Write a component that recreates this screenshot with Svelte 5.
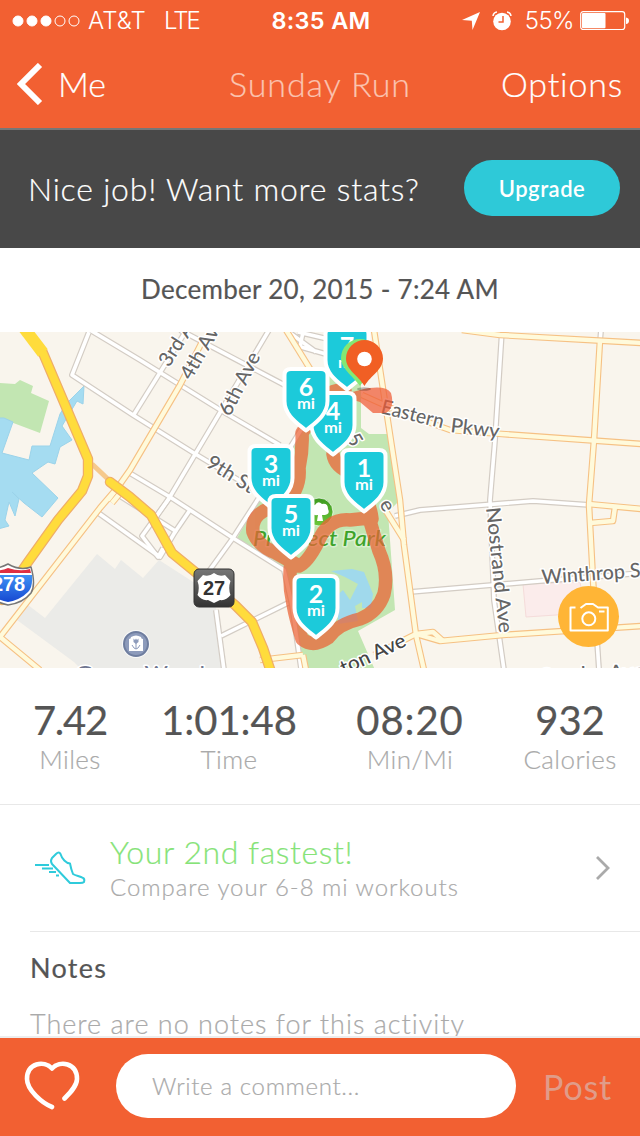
<script lang="ts">
  const stats = [
    { value: "7.42", label: "Miles", cls: "miles" },
    { value: "1:01:48", label: "Time", cls: "time" },
    { value: "08:20", label: "Min/Mi", cls: "pace" },
    { value: "932", label: "Calories", cls: "cal" },
  ];

  // x is the centre of the marker, y its top edge
  const backMarkers = [{ n: 7, x: 347, y: 326 }];
  const markers = [
    { n: 4, x: 333, y: 391 },
    { n: 6, x: 306, y: 367 },
    { n: 3, x: 271, y: 444 },
    { n: 1, x: 364, y: 448 },
    { n: 5, x: 291, y: 494 },
    { n: 2, x: 316, y: 574 },
  ];

  const streets = [
    "M180 330L292 389",
    "M90 330L140 360L222 411L280 445",
    "M89 332L72 375L133 415L197 455L262 494",
    "M133 416L184 334",
    "M269 330L168 500L142 536L158 557L163 548",
    "M128 472L170 497L190 510L233 538L284 570L292 605L301 668",
    "M120 496L177 532",
    "M190 510L175 532L160 557L97 512",
    "M170 497L156 517",
    "M204 578L233 538L262 493L304 425",
    "M216 610L224 670",
    "M221 636L288 603",
    "M286 330L316 352M298 332L345 343M294 345L340 358M303 332L300 347",
    "M502 330L495 440L490 500L494 600L504 670",
    "M601 330L600 342",
    "M395 516L420 510L533 501L590 505",
    "M410 592L540 581L642 573",
    "M597 640L599 670",
  ];

  const avenues = [
    "M204 338L180 385L130 470L118 487L100 508L0 637L40 670",
    "M118 487L108 500M122 491L112 503",
    "M286 330L312 372",
    "M374 330L400 500L404 545L416 635L424 670",
    "M384 508L404 540",
    "M362 395L400 412L450 430L502 434L642 444",
    "M462 330L500 335L642 343",
    "M600 340L594 440L589 505L593 580L597 640",
    "M588 504L642 509",
    "M590 523L613 521L615 507",
    "M374 655L416 634L440 641L503 635L642 626",
    "M416 634L433 632L443 641",
    "M260 660L303 655M303 655L306 670",
  ];

  const highways = [
    "M24 328L43 353L88 459L88 476L82 491L58 520L28 562L2 600",
    "M110 482L130 497L151 515L172 553L205 580L235 605L252 622L263 648L271 672",
  ];
</script>

{#snippet marker(n: number, x: number, y: number)}
  <g transform="translate({x} {y})">
    <path
      d="M-15 2H15Q21.500 2 21.500 8V34C21.500 48 9 56 0 63.500C-9 56 -21.500 48 -21.500 34V8Q-21.500 2 -15 2Z"
      fill="#1ccada"
      stroke="#fff"
      stroke-width="4"
    />
    <text class="mile" y="29">{n}</text>
    <text class="unit" y="42" textLength="18" lengthAdjust="spacingAndGlyphs">mi</text>
  </g>
{/snippet}

<div class="screen">
  <header>
    <div class="status">
      <div class="carrier">
        <svg width="68" height="12" viewBox="0 0 68 12" fill="#fff" stroke="#fff">
          <circle cx="6" cy="6" r="5" />
          <circle cx="20" cy="6" r="5" />
          <circle cx="34" cy="6" r="5" />
          <circle cx="48" cy="6" r="5" fill="none" />
          <circle cx="62" cy="6" r="5" fill="none" />
        </svg>
        <span class="att">AT&amp;T</span>
        <span class="lte">LTE</span>
      </div>
      <div class="clock">8:35 AM</div>
      <div class="indicators">
        <svg width="18" height="18" viewBox="0 0 18 18" fill="#fff">
          <path d="M18 0L10.500 18L9.800 8.700L0 8Z" />
        </svg>
        <svg class="alarm" width="20" height="20" viewBox="0 0 20 20">
          <circle cx="10" cy="10.500" r="8.800" fill="#fff" />
          <path d="M11 5V11H6.500" fill="none" stroke="#f26032" stroke-width="1.500" />
          <path d="M1 5Q1.500 1.500 5 1M15 1Q18.500 1.500 19 5" fill="none" stroke="#fff" stroke-width="1.500" />
        </svg>
        <span class="percent">55%</span>
        <svg width="50" height="20" viewBox="0 0 50 20">
          <rect x=".7" y=".7" width="44" height="17.800" rx="2.500" fill="none" stroke="#fff" stroke-width="1.200" />
          <rect x="2" y="2" width="23.500" height="15.200" rx="1" fill="#fff" />
          <path d="M46 6.500Q49 7 49 9.700Q49 12.500 46 13Z" fill="#fff" />
        </svg>
      </div>
    </div>
    <nav>
      <button class="back">
        <svg width="26" height="42" viewBox="0 0 26 42" fill="none" stroke="#fff" stroke-width="6">
          <path d="M23 2L4 21L23 40" />
        </svg>
        <span>Me</span>
      </button>
      <h1>Sunday Run</h1>
      <button class="options">Options</button>
    </nav>
  </header>

  <section class="promo">
    <span>Nice job! Want more stats?</span>
    <button>Upgrade</button>
  </section>

  <div class="date"><span>December 20, 2015 - 7:24 AM</span></div>

  <div class="map">
    <svg width="640" height="336" viewBox="0 332 640 336">
      <defs>
        <linearGradient id="blue" x2="0" y2="1">
          <stop offset="0" stop-color="#3e92f5" />
          <stop offset="1" stop-color="#1648d1" />
        </linearGradient>
        <linearGradient id="slate" x2="0" y2="1">
          <stop offset="0" stop-color="#777" />
          <stop offset="1" stop-color="#333" />
        </linearGradient>
        <linearGradient id="tree" x2="0" y2="1">
          <stop offset="0" stop-color="#3c991f" />
          <stop offset="1" stop-color="#6cc83b" />
        </linearGradient>
      </defs>
      <rect y="332" width="640" height="336" fill="#f9f5ed" />

      <path d="M97 554L115 569L121 560L143 578L159 560L201 587L216 608L224 670H82L74 662L17 620L28 605L45 618Z" fill="#ebebe8" />
      <path d="M0 383L15 384L20 380L33 386L31 393L49 401L40 433L0 418Z" fill="#c2e6b2" />
      <path
        d="M4 418L13 422L2 453L29 460L32 446L50 446L60 414L66 404L84 386L83 404L77 401L62 426L72 440L60 447L55 464L48 462L32 473L58 498L42 517L24 503L12 492L19 499L15 516L9 502L5 520L9 526L-2 529V418Z"
        fill="#a5dcf1"
        stroke="#9bd3ea"
      />
      <path d="M523 584L580 582L586 613L526 617Z" fill="#fbeceb" stroke="#f5dcda" />
      <path
        d="M333 370L361 384V428L369 434H389L400 500L388 512L395 610L358 631L375 670H302L286 570L237 538L262 494L300 430Z"
        fill="#c2e6b2"
      />
      <path
        d="M331 571L352 569L364 572L373 594L371 608L362 608V599L371 597L355 606L358 621L338 624V605L332 600L343 590L350 600L358 584L345 577Z"
        fill="#a0d9ec"
      />

      {#each streets as d}<path {d} class="street-edge" />{/each}
      {#each streets as d}<path {d} class="street" />{/each}
      {#each avenues as d}<path {d} class="avenue-edge" />{/each}
      {#each avenues as d}<path {d} class="avenue" />{/each}
      <path d="M92 464L110 481" stroke="#f6c98c" stroke-width="5" />
      {#each highways as d}<path {d} class="highway-edge" />{/each}
      {#each highways as d}<path {d} class="highway" />{/each}
      <path d="M24 328L43 353" stroke="#ffdc3c" stroke-width="12" />

      <g class="labels">
        <text transform="translate(169 368) rotate(-57)">3rd Ave</text>
        <text transform="translate(191 381) rotate(-60)">4th Ave</text>
        <text transform="translate(230 417) rotate(-63)" textLength="68" lengthAdjust="spacingAndGlyphs">6th Ave</text>
        <text transform="translate(205 466) rotate(32)">9th St</text>
        <text transform="translate(346 438) rotate(60)" font-size="18">5</text>
        <text transform="translate(379 504) rotate(60)">e</text>
        <text transform="translate(380 413) rotate(14)" textLength="64" lengthAdjust="spacingAndGlyphs">Eastern</text>
        <text transform="translate(450 432) rotate(7)" textLength="49" lengthAdjust="spacingAndGlyphs">Pkwy</text>
        <text transform="translate(486 508) rotate(84)" textLength="126" lengthAdjust="spacingAndGlyphs">Nostrand Ave</text>
        <text transform="translate(542 584) rotate(-4)" textLength="106" lengthAdjust="spacingAndGlyphs">Winthrop St</text>
        <text class="strong" transform="translate(344 675) rotate(-25)" textLength="70" lengthAdjust="spacingAndGlyphs">ton Ave</text>
        <text transform="translate(541 683) rotate(-3)" textLength="104" lengthAdjust="spacingAndGlyphs">Snyder Ave</text>
        <text class="poi" x="76" y="680" textLength="129" lengthAdjust="spacingAndGlyphs">Green-Wood</text>
        <text class="park" x="253" y="546" textLength="133" lengthAdjust="spacingAndGlyphs">Prospect Park</text>
      </g>

      <circle cx="319" cy="512" r="14" fill="url(#tree)" stroke="#fff" stroke-opacity=".7" />
      <path
        d="M317 521L318 515Q310 516 312 510Q310 505 315 505Q318 500 322 504Q328 503 328 509Q331 515 322 515L323 521Z"
        fill="#fff"
      />

      <circle cx="136" cy="644" r="14" fill="#fff" fill-opacity=".7" />
      <circle cx="136" cy="644" r="12" fill="#8d9bbb" stroke="#6f7e9f" stroke-width="2" />
      <path d="M129 651V639Q131 639 131 637Q136 634 141 637Q141 639 143 639V651Z" fill="#fff" />
      <path d="M136 649V643M132 645Q134 649 136 649Q138 649 140 645" fill="none" stroke="#8d9bbb" />
      <path d="M133.500 638.500L135 640L136 638.500L137 640L138.500 638.500V642L136 644L133.500 642Z" fill="#8d9bbb" />

      <path d="M-16 566Q-5 571 8 564Q20 571 31 567Q36 585 31 593Q23 603 8 605Q-12 600 -18 590Z" fill="#fff" stroke="#777" stroke-width="1.500" />
      <path d="M-14 568Q-3 573 8 568Q20 572 30 569L31 573H-15Z" fill="#df2f43" />
      <path d="M-15 575H32Q33 587 28 592Q20 600 8 602Q-10 598 -15 588Z" fill="url(#blue)" />
      <text class="shield" x="-8" y="591" fill="#fff" textLength="33">278</text>

      <rect x="194" y="569" width="40" height="38" rx="5" fill="url(#slate)" stroke="#333" />
      <path d="M203 575Q209 577 214 573Q219 577 225 575L230.500 581Q228 588 230.500 595Q226 601 220 600L214 603L208 600Q202 601 197.500 595Q200 588 197.500 581Z" fill="#fff" />
      <text class="shield" x="203" y="595" fill="#333" textLength="22">27</text>

      <g class="route">
        <path
          d="M345 391Q326 388 317 410L302 433Q303 450 299 468Q301 490 283 505Q250 510 253 532Q258 546 276 553Q292 562 299 566Q308 562 318 542Q328 518 350 520L369 518Q374 535 379 551Q389 573 384 594Q378 612 360 619Q338 624 328 638Q313 648 302 639Q296 620 293 604Q288 582 291 561"
        />
        <path d="M333 454Q335 468 354 474Q370 500 372 519" />
      </g>
      <path d="M345 394L360 390Q385 384 391 393Q395 408 386 413L373 413L360 402L343 397Z" fill="#ef5a34" fill-opacity=".72" />

      {#each backMarkers as m}{@render marker(m.n, m.x, m.y)}{/each}
      <path d="M360 386C354 377 341 369 341 358A19 19 0 0 1 379 358C379 369 366 377 360 386Z" fill="#84e873" />
      <ellipse cx="364" cy="389" rx="7" ry="1.800" fill="#000" opacity=".25" />
      {#each markers as m}{@render marker(m.n, m.x, m.y)}{/each}
      <path d="M364.500 386C358 375 346 370 346 358.500A18.500 18.500 0 0 1 383 358.500C383 370 371 375 364.500 386Z" fill="#f15f24" />
      <circle cx="364.500" cy="359" r="7.300" fill="#fff" />
    </svg>

    <button class="camera" aria-label="Add photo">
      <svg width="40" height="32" viewBox="0 0 40 32" fill="none" stroke="#fff" stroke-width="2">
        <path d="M6.500 6.500H1.500V29.500H38.800V6.500H29L24 3H17L11.500 7" />
        <circle cx="19.800" cy="17.800" r="6.500" />
        <path d="M30 10.500H35.500" />
      </svg>
    </button>
  </div>

  <section class="stats">
    {#each stats as s}
      <div class="stat">
        <div class="value {s.cls}">{s.value}</div>
        <div class="label">{s.label}</div>
      </div>
    {/each}
  </section>

  <section class="compare">
    <svg class="shoe" width="52" height="34" viewBox="0 0 52 34" fill="none" stroke="#2fcbdb" stroke-width="2">
      <path
        d="M21 3Q24 0 25.500 3C27 8 31 12 35 12.500Q36 18 38 23C41 25 45 25 48 27Q50 28 49 31Q48 32 45 32H35L17 13Q15 10 17 7Z"
        stroke-linejoin="round"
      />
      <path d="M0 14H14M7 17.500H18M14 21H21M21 24.500H24" />
    </svg>
    <div class="compare-text">
      <div class="headline">Your 2nd fastest!</div>
      <div class="sub">Compare your 6-8 mi workouts</div>
    </div>
    <svg width="16" height="26" viewBox="0 0 16 26" fill="none" stroke="#aaa" stroke-width="2.800">
      <path d="M2 2L13 13L2 24" />
    </svg>
  </section>

  <section class="notes">
    <h2>Notes</h2>
    <p>There are no notes for this activity</p>
  </section>

  <footer>
    <svg width="56" height="50" viewBox="0 0 56 50" fill="none" stroke="#fff" stroke-width="4.600" stroke-linecap="round" stroke-linejoin="round">
      <path d="M28 46C18 42 3 29 3 18C3 2 20 -1 28 7.500C36 -1 53 2 53 18C53 25 46 32 40.500 37.500" />
    </svg>
    <div class="input">Write a comment...</div>
    <button class="post">Post</button>
  </footer>
</div>

<style>
  :global(body) {
    margin: 0;
    background: #fff;
  }

  .screen {
    width: 640px;
    height: 1136px;
    overflow: hidden;
    display: flex;
    flex-direction: column;
    background: #fff;
    color: #555;
    font-family: Lato, "Open Sans", sans-serif;
    font-weight: 300;
    white-space: nowrap;
    -webkit-text-stroke: 0.2px;
  }

  button {
    border: none;
    padding: 0;
    background: none;
    font: inherit;
    color: inherit;
  }

  svg {
    display: block;
    flex-shrink: 0;
  }

  header {
    height: 128px;
    flex-shrink: 0;
    background: #f26032;
    border-bottom: 2px solid #777;
    color: #fff;
  }

  .status {
    display: grid;
    grid-template-columns: 1fr 100px 1fr;
    align-items: center;
    height: 41px;
    padding: 0 10px 0 12px;
    font-family: Inter, sans-serif;
    font-size: 24px;
    -webkit-text-stroke: 0;
  }

  .carrier,
  .indicators {
    display: flex;
    align-items: center;
  }

  .att {
    margin-left: 8px;
    width: 76px;
    letter-spacing: 0.1px;
  }

  .lte {
    letter-spacing: -2px;
  }

  .clock {
    font-size: 23.5px;
    font-weight: 600;
    text-align: center;
    letter-spacing: 0.3px;
  }

  .indicators {
    justify-content: flex-end;
  }

  .alarm {
    margin-left: 12px;
  }

  .percent {
    margin: 0 6px 0 13px;
    letter-spacing: -0.6px;
  }

  nav {
    display: grid;
    grid-template-columns: 1fr 200px 1fr;
    align-items: center;
    height: 86px;
    padding: 0 17px;
    font-size: 34px;
  }

  .back {
    display: flex;
    align-items: center;
    gap: 15px;
  }

  .back span,
  h1,
  .options {
    margin-top: -2px;
  }

  h1 {
    margin-bottom: 0;
    font-size: 34px;
    font-weight: 300;
    text-align: center;
    letter-spacing: 0.9px;
    color: #fbc4b1;
  }

  .options {
    text-align: right;
    letter-spacing: 0.8px;
  }

  .promo {
    display: flex;
    justify-content: space-between;
    align-items: center;
    height: 116px;
    flex-shrink: 0;
    padding: 0 20px 2px 28px;
    background: #484848;
    color: #fff;
    font-size: 32px;
    letter-spacing: 0.8px;
  }

  .promo button {
    width: 156px;
    height: 56px;
    border-radius: 28px;
    background: #2ec9d8;
    font-size: 22px;
    font-weight: 600;
    letter-spacing: 0.5px;
    -webkit-text-stroke: 0;
  }

  .date {
    height: 82px;
    padding-bottom: 2px;
    flex-shrink: 0;
    display: flex;
    align-items: center;
    justify-content: center;
    font-size: 26px;
    font-weight: 400;
    letter-spacing: 0.3px;
  }

  .map {
    position: relative;
    height: 336px;
    flex-shrink: 0;
    -webkit-text-stroke: 0;
  }

  .map path {
    stroke-linejoin: round;
  }

  .street-edge,
  .street,
  .avenue-edge,
  .avenue,
  .highway-edge,
  .highway,
  .route path {
    fill: none;
  }

  .street-edge {
    stroke: #d3ccc4;
    stroke-width: 6;
  }

  .street {
    stroke: #fff;
    stroke-width: 3.6;
  }

  .avenue-edge {
    stroke: #f6c184;
    stroke-width: 6.6;
  }

  .avenue {
    stroke: #fffadb;
    stroke-width: 4.4;
  }

  .highway-edge {
    stroke: #efad68;
    stroke-width: 10.4;
    stroke-linecap: round;
  }

  .highway {
    stroke: #ffdc3c;
    stroke-width: 8;
    stroke-linecap: round;
  }

  .route path {
    stroke: #ec6234;
    stroke-width: 13.5;
    stroke-linecap: round;
  }

  .route {
    opacity: 0.72;
  }

  .labels text {
    font-size: 20px;
    font-weight: 500;
    fill: #666;
    stroke: #fff;
    stroke-width: 3px;
    stroke-linejoin: round;
    paint-order: stroke;
  }

  .labels .strong {
    fill: #444;
  }

  .labels .poi {
    fill: #6f7690;
  }

  .labels .park {
    fill: #3ea32a;
    font-size: 22px;
    font-style: italic;
    stroke-opacity: 0.4;
  }

  .shield {
    font-family: "Liberation Sans", sans-serif;
    font-size: 20px;
    font-weight: 700;
  }

  .mile,
  .unit {
    fill: #fff;
    font-weight: 700;
    text-anchor: middle;
  }

  .mile {
    font-size: 25px;
  }

  .unit {
    font-size: 16px;
  }

  .camera {
    position: absolute;
    right: 21px;
    bottom: 21px;
    width: 61px;
    height: 61px;
    border-radius: 50%;
    background: #ffb536;
    display: flex;
    align-items: center;
    justify-content: center;
  }

  .stats {
    display: grid;
    grid-template-columns: 140px 178px 184px 136px;
    height: 136px;
    flex-shrink: 0;
    border-bottom: 1px solid #e8e8e8;
    text-align: center;
  }

  .value {
    margin-top: 28px;
    font-size: 40px;
    line-height: 48px;
    font-weight: 400;
  }

  .miles {
    letter-spacing: -1.2px;
  }

  .pace {
    letter-spacing: 0.9px;
  }

  .label {
    margin-top: -1px;
    font-size: 26px;
    line-height: 32px;
    color: #aaa;
    letter-spacing: 0.4px;
  }

  .compare {
    display: flex;
    align-items: center;
    height: 126px;
    flex-shrink: 0;
    margin-left: 30px;
    padding: 0 29px 0 5px;
    border-bottom: 1px solid #e8e8e8;
  }

  .compare-text {
    flex: 1;
    margin: 2px 0 0 23px;
  }

  .headline {
    color: #86e378;
    font-size: 32px;
    line-height: 36px;
    letter-spacing: 0.6px;
  }

  .sub {
    color: #aaa;
    font-size: 24px;
    line-height: 34px;
    letter-spacing: 0.95px;
  }

  .notes {
    height: 104px;
    flex-shrink: 0;
    overflow: hidden;
    padding-left: 30px;
  }

  h2 {
    margin: 20px 0 0;
    font-size: 27px;
    line-height: 32px;
    font-weight: 400;
    letter-spacing: 1.3px;
  }

  .notes p {
    margin: 24px 0 0;
    color: #aaa;
    font-size: 27px;
    line-height: 32px;
    letter-spacing: 1px;
  }

  footer {
    display: flex;
    align-items: center;
    height: 96px;
    flex-shrink: 0;
    padding: 0 28px 2px 24px;
    background: #f26032;
    border-top: 2px solid #ededed;
  }

  .input {
    width: 364px;
    margin-left: 36px;
    padding-left: 36px;
    border-radius: 32px;
    background: #fff;
    color: #aaa;
    font-size: 24px;
    line-height: 64px;
    letter-spacing: 0.65px;
  }

  .post {
    margin-left: auto;
    color: #e09c89;
    font-size: 34px;
    font-weight: 400;
    letter-spacing: 0.8px;
    -webkit-text-stroke: 0;
  }
</style>
